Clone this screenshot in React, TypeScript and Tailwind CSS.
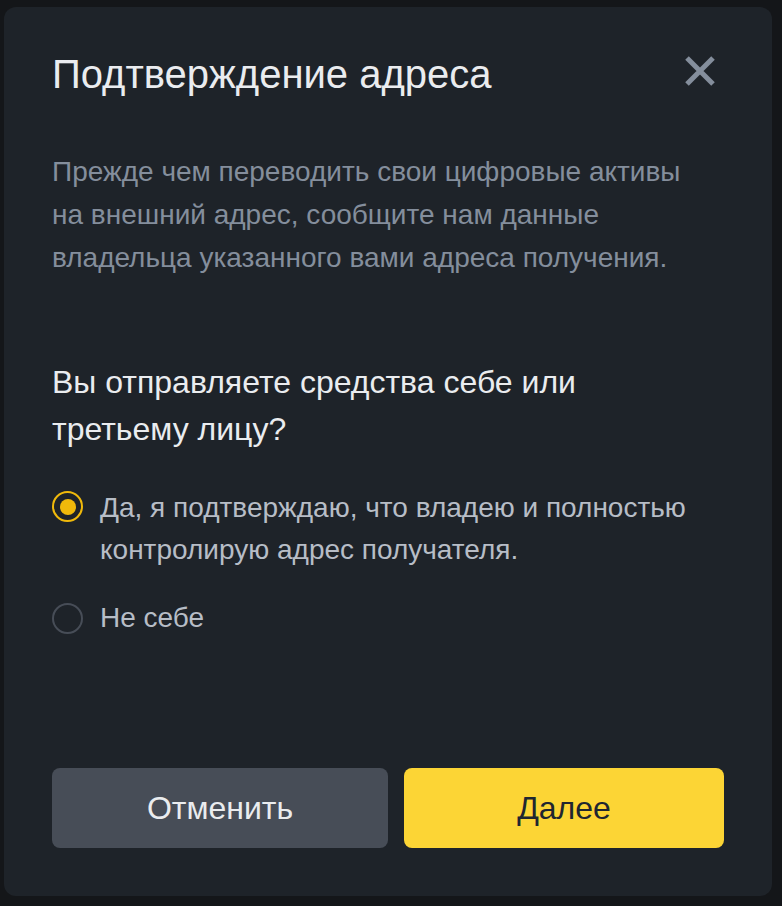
import { useState } from 'react';

function CloseIcon() {
  return (
    <svg width="32" height="32" viewBox="0 0 32 32" fill="none">
      <path d="M3 3L29 29M29 3L3 29" stroke="#848e9c" strokeWidth="5" />
    </svg>
  );
}

function Radio({ checked }: { checked: boolean }) {
  return (
    <span
      className={
        checked
          ? 'flex h-[31px] w-[31px] shrink-0 items-center justify-center rounded-full border-[2.5px] border-[#f0b90b]'
          : 'flex h-[31px] w-[31px] shrink-0 items-center justify-center rounded-full border-2 border-[#474d57]'
      }
    >
      {checked && <span className="h-[16px] w-[16px] rounded-full bg-[#f0b90b]" />}
    </span>
  );
}

export default function App() {
  const [self, setSelf] = useState(true);

  return (
    <div className="min-h-[906px] w-full bg-[#141619] pl-[4px] pt-[7px] font-['Liberation_Sans',Arial,sans-serif]">
      <div className="flex h-[889px] w-[768px] flex-col rounded-[12px] bg-[#1e2329] px-[48px] pb-[48px] pt-[39px]">
        <div className="flex items-start justify-between">
          <h1 className="text-[40px] leading-[56px] text-[#eaecef]">Подтверждение адреса</h1>
          <button className="mr-[8px] mt-[9px]">
            <CloseIcon />
          </button>
        </div>

        <p className="mt-[48px] w-[640px] text-[28px] leading-[43px] text-[#848e9c]">
          Прежде чем переводить свои цифровые активы на внешний адрес, сообщите нам данные
          владельца указанного вами адреса получения.
        </p>

        <h2 className="mt-[80px] w-[580px] text-[32px] leading-[47px] text-[#eaecef]">
          Вы отправляете средства себе или третьему лицу?
        </h2>

        <div className="mt-[34px] flex flex-col gap-[26px]">
          <label className="flex cursor-pointer gap-[17px]" onClick={() => setSelf(true)}>
            <span className="pt-[4px]">
              <Radio checked={self} />
            </span>
            <span className="text-[28px] leading-[42px] text-[#b7bdc6]">
              Да, я подтверждаю, что владею и полностью
              <br />
              контролирую адрес получателя.
            </span>
          </label>
          <label className="flex cursor-pointer items-center gap-[17px]" onClick={() => setSelf(false)}>
            <Radio checked={!self} />
            <span className="text-[28px] leading-[42px] text-[#b7bdc6]">Не себе</span>
          </label>
        </div>

        <div className="mt-auto flex gap-[16px]">
          <button className="h-[80px] w-[336px] rounded-[8px] bg-[#474d57] text-[32px] text-[#eaecef]">
            Отменить
          </button>
          <button className="h-[80px] w-[320px] rounded-[8px] bg-[#fcd535] text-[32px] text-[#202630]">
            Далее
          </button>
        </div>
      </div>
    </div>
  );
}
